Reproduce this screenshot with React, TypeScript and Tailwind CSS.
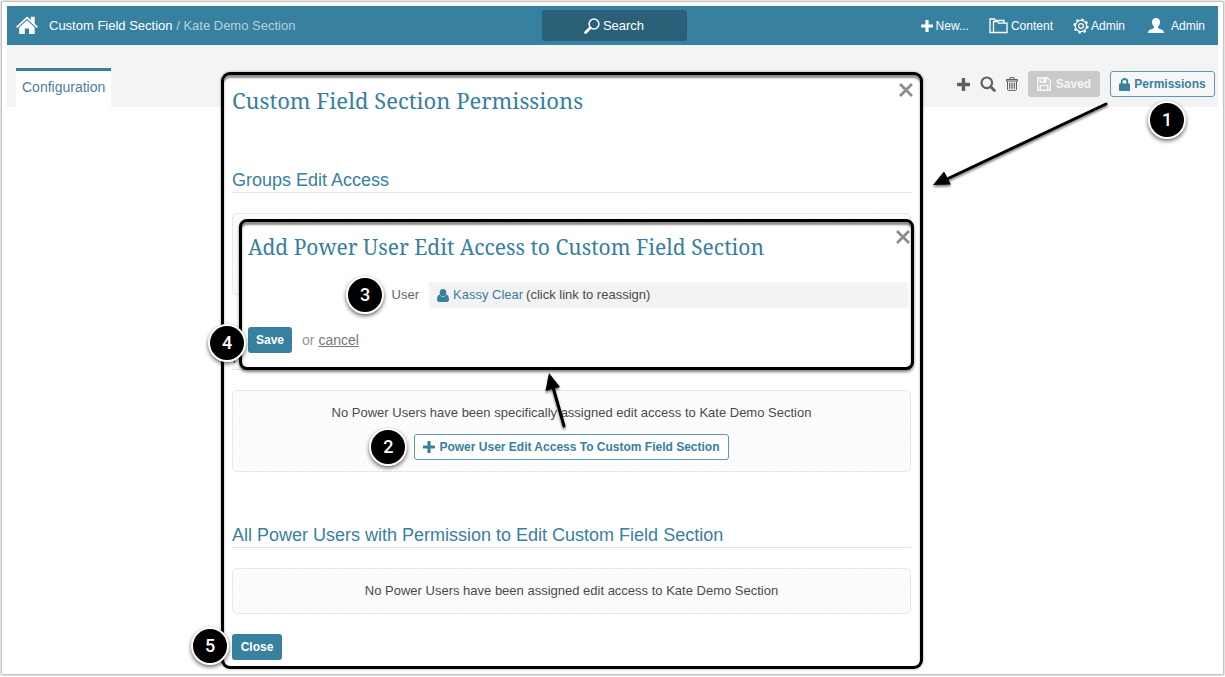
import type { ReactNode } from 'react'

const sans = "font-['Liberation_Sans',Arial,sans-serif]"
const serif = "font-['Noto_Serif','Liberation_Serif',serif]"

function cn(...classes: (string | false | undefined)[]) {
  return classes.filter(Boolean).join(' ')
}

function HomeIcon() {
  return (
    <svg viewBox="0 0 22 19" className="h-[19px] w-[22px]" fill="currentColor" aria-hidden="true">
      <path d="M11 .4 14.800 4V.8h3.900v6.900L22 10.800l-1.200 1.300L11 2.800 1.200 12.100 0 10.800z" />
      <path d="M11 4.200 3.200 11.600v6.400h5.600v-5.400h4.200v5.400h5.700v-6.400z" />
    </svg>
  )
}

function HeaderSearchIcon() {
  return (
    <svg viewBox="0 0 16 16" className="h-4 w-4" fill="none" stroke="currentColor" aria-hidden="true">
      <circle cx="10" cy="6" r="4.9" strokeWidth="1.5" />
      <path d="M6 10 1.600 14.400" strokeWidth="2.800" strokeLinecap="round" />
    </svg>
  )
}

function PlusIcon({ className = 'h-3 w-3' }: { className?: string }) {
  return (
    <svg viewBox="0 0 12 12" className={className} fill="currentColor" aria-hidden="true">
      <path d="M5 0h2a.6.6 0 0 1 .6.6v3.8h3.8a.6.6 0 0 1 .6.6v2a.6.6 0 0 1-.6.6H7.6v3.8A.6.6 0 0 1 7 12H5a.6.6 0 0 1-.6-.6V7.6H.6A.6.6 0 0 1 0 7V5a.6.6 0 0 1 .6-.6h3.8V.6A.6.6 0 0 1 5 0z" />
    </svg>
  )
}

function FoldersIcon() {
  return (
    <svg viewBox="0 0 19 16" className="h-4 w-[19px]" fill="none" stroke="currentColor" strokeWidth="1.3" aria-hidden="true">
      <path d="M4.500 14.500H1V1h4.500l1 1.500h8.500V5" />
      <path d="M4.500 14.500V3.500h4l1 1.700h8.500v9.300z" />
    </svg>
  )
}

function GearIcon() {
  return (
    <svg viewBox="0 0 16 16" className="h-4 w-4" fill="none" stroke="currentColor" aria-hidden="true">
      <circle cx="8" cy="8" r="6.9" strokeWidth="1.4" strokeDasharray="2.6 2.819" />
      <circle cx="8" cy="8" r="5.6" strokeWidth="1.2" />
      <circle cx="8" cy="8" r="2.4" strokeWidth="1.2" />
    </svg>
  )
}

function ProfileIcon() {
  return (
    <svg viewBox="0 0 16 15" className="h-[15px] w-4" fill="currentColor" aria-hidden="true">
      <path d="M8 0c2.600 0 4 1.700 4 4.100 0 2-.9 3.700-2 4.700v1.300c1 1 6 1.300 6 4.900H0c0-3.600 5-3.900 6-4.900V8.800C4.900 7.800 4 6.100 4 4.100 4 1.700 5.400 0 8 0z" />
    </svg>
  )
}

function UserIcon() {
  return (
    <svg viewBox="0 0 12 13" className="h-[13px] w-3" fill="currentColor" aria-hidden="true">
      <ellipse cx="6" cy="3.7" rx="3.3" ry="3.7" />
      <path d="M2.800 5.500c.8 1.700 1.900 2.500 3.200 2.500s2.400-.8 3.200-2.500c2 .4 2.800 2.500 2.800 5 0 1.600-.9 2.500-2.300 2.500H2.300C.9 13 0 12.100 0 10.500c0-2.500.8-4.600 2.800-5z" />
    </svg>
  )
}

function SearchIcon() {
  return (
    <svg viewBox="0 0 16 16" className="h-4 w-4" fill="none" stroke="currentColor" aria-hidden="true">
      <circle cx="6.8" cy="6.8" r="5.3" strokeWidth="2.2" />
      <path d="m11 11 3.400 3.400" strokeWidth="2.800" strokeLinecap="round" />
    </svg>
  )
}

function TrashIcon() {
  return (
    <svg viewBox="0 0 12 14" className="h-[14px] w-3" fill="none" stroke="currentColor" aria-hidden="true">
      <path d="M.5 4V2.500h11V4zM4 2.500V.6h4v1.900M1.500 4v8.300c0 .7.400 1.100 1.100 1.100h6.800c.7 0 1.100-.4 1.100-1.100V4" />
      <path d="M3.500 5.500v6.300M5.200 5.500v6.300M6.900 5.500v6.300M8.600 5.500v6.300" strokeWidth=".9" />
    </svg>
  )
}

function FloppyIcon() {
  return (
    <svg viewBox="0 0 14 14" className="h-[14px] w-[14px]" fill="none" stroke="currentColor" strokeWidth="1.4" strokeLinejoin="round" aria-hidden="true">
      <path d="M.7.7h9.600l3 3v9.600H.7z" />
      <path d="M3.200 13V8.500h7.600V13M3.200 1v4.200h6V1" />
      <path d="M6.600 1.500h1.600v2.600H6.600z" fill="currentColor" />
    </svg>
  )
}

function LockIcon() {
  return (
    <svg viewBox="0 0 11 13" className="h-[13px] w-[11px]" aria-hidden="true">
      <path d="M2.700 6V3.800a2.800 2.800 0 0 1 5.600 0V6" fill="none" stroke="currentColor" strokeWidth="1.8" />
      <rect y="5.600" width="11" height="7.400" rx=".8" fill="currentColor" />
    </svg>
  )
}

function CloseButton({ className }: { className: string }) {
  return (
    <button type="button" aria-label="Close dialog" className={cn('absolute text-[#8c8c8c]', className)}>
      <svg viewBox="0 0 14 14" className="h-[14px] w-[14px]" stroke="currentColor" strokeWidth="2.8" aria-hidden="true">
        <path d="m1 1 12 12M13 1 1 13" />
      </svg>
    </button>
  )
}

function Step({ n, className }: { n: number; className: string }) {
  return (
    <span
      className={cn(
        "absolute z-20 flex h-[38px] w-[38px] items-center justify-center rounded-full border-2 border-white bg-black font-['Roboto',sans-serif] text-[18px] leading-none font-medium text-white shadow-[0_2px_4px_rgba(0,0,0,0.6)]",
        className
      )}
    >
      {n}
    </span>
  )
}

function SectionHeading({ children, className }: { children: ReactNode; className?: string }) {
  return (
    <h3 className={cn('border-b border-[#e4e4e4] text-[18px] leading-6 text-[#37809f]', className)}>{children}</h3>
  )
}

function Panel({ children, className }: { children?: ReactNode; className?: string }) {
  return (
    <div
      className={cn(
        'mt-5 flex flex-col items-center rounded-[5px] border border-[#e8e8e8] bg-[repeating-linear-gradient(135deg,#fdfdfd_0_2px,#fafafa_2px_4px)] text-[13px] leading-5 text-[#4a4a4a]',
        className
      )}
    >
      {children}
    </div>
  )
}

function Header() {
  return (
    <header className="flex h-[39px] items-center bg-[#37809f] text-white">
      <div className="flex flex-1 items-center pl-[9px]">
        <a href="#home" aria-label="Home"><HomeIcon /></a>
        <nav className="ml-[11px] text-[13px] text-[#b5d0dc]">
          <a href="#section" className="text-white">Custom Field Section</a> / Kate Demo Section
        </nav>
      </div>
      <button type="button" className="ml-[7px] flex h-[31px] w-[145px] items-center justify-center gap-[3px] rounded-[3px] bg-[#2b6079] text-[13px]">
        <HeaderSearchIcon />
        Search
      </button>
      <nav className="flex flex-1 items-center justify-end pr-[13px] text-[12px]">
        <a href="#new" className="flex items-center gap-[3px]"><PlusIcon />New...</a>
        <a href="#content" className="ml-5 flex items-center gap-[3px]"><FoldersIcon />Content</a>
        <a href="#admin" className="ml-5 flex items-center gap-[2px]"><GearIcon />Admin</a>
        <a href="#profile" className="ml-[23px] flex items-center gap-[7px]"><ProfileIcon />Admin</a>
      </nav>
    </header>
  )
}

function Toolbar() {
  return (
    <div className="flex h-[62px] items-end justify-between bg-[#f4f4f4] pr-[3px] pl-[9px]">
      <a href="#configuration" className="flex h-[39px] items-center border-t-[3px] border-[#37809f] bg-white px-[6px] pb-1 text-[14px] text-[#4c7f99]">
        Configuration
      </a>
      <div className="flex items-center pb-[10px] text-[12px] font-bold text-[#606060]">
        <button type="button" aria-label="Add"><PlusIcon className="h-[13px] w-[13px]" /></button>
        <button type="button" aria-label="Find" className="ml-[10px]"><SearchIcon /></button>
        <button type="button" aria-label="Delete" className="ml-[10px]"><TrashIcon /></button>
        <button type="button" disabled className="ml-[10px] flex h-[26px] w-[72px] items-center justify-center gap-[5px] rounded-[3px] bg-[#cacaca] text-[#f6f6f6]">
          <FloppyIcon />
          Saved
        </button>
        <div className="relative ml-[10px]">
          <button type="button" className="flex h-[26px] w-[105px] items-center justify-center gap-1 rounded-[3px] border border-[#5c9ab4] bg-[#f7f7f7] text-[#37809f]">
            <LockIcon />
            Permissions
          </button>
          <Step n={1} className="top-[30px] left-[38px]" />
        </div>
      </div>
    </div>
  )
}

function AddPowerUserDialog() {
  return (
    <form
      role="dialog"
      aria-label="Add Power User"
      className="absolute top-[144px] right-[6px] left-[15px] z-10 rounded-[8px] border-[3px] border-black bg-white pt-[9px] pr-[3px] pb-[14px] pl-[6px] shadow-[0_2px_3px_rgba(0,0,0,0.5),inset_0_3px_2px_rgba(0,0,0,0.45)]"
    >
      <CloseButton className="top-[8px] right-[1px]" />
      <h2 className={cn(serif, 'text-[21px] leading-8 text-[#37809f]')}>
        Add Power User Edit Access to Custom Field Section
      </h2>
      <div className="mt-[19px] flex items-center text-[13px]">
        <span className="relative w-[171px] text-right text-[#666]">
          User
          <Step n={3} className="top-[-9px] left-[98px]" />
        </span>
        <div className="ml-[10px] flex h-[26px] flex-1 items-center bg-[#f3f3f3] pl-2 text-[#4a4a4a]">
          <a href="#reassign" className="mr-[3px] flex items-center gap-1 text-[#37809f]"><UserIcon />Kassy Clear</a>
          (click link to reassign)
        </div>
      </div>
      <div className="relative mt-[19px] flex items-center text-[14px] text-[#999]">
        <button type="submit" className="h-[26px] w-11 rounded-[3px] bg-[#37809f] text-[12px] font-bold text-white">Save</button>
        <span className="mr-1 ml-[10px]">or</span>
        <a href="#cancel" className="text-[#777] underline">cancel</a>
        <Step n={4} className="top-[-3px] left-[-40px]" />
      </div>
    </form>
  )
}

function PermissionsDialog() {
  return (
    <section
      role="dialog"
      aria-label="Permissions"
      className="absolute top-[70px] right-[300px] left-[219px] rounded-[9px] border-[3px] border-black bg-white pt-[9px] pr-[9px] pb-[6px] pl-2 shadow-[0_0_3px_rgba(0,0,0,0.35),inset_0_3px_2px_rgba(0,0,0,0.45)]"
    >
      <CloseButton className="top-[8px] right-[7px]" />
      <h2 className={cn(serif, 'text-[22px] leading-8 text-[#37809f]')}>Custom Field Section Permissions</h2>

      <SectionHeading className="mt-[52px]">Groups Edit Access</SectionHeading>
      <Panel className="h-[82px]" />

      <SectionHeading className="mt-[50px]">Power Users Edit Access</SectionHeading>
      <Panel className="pt-3 pb-[11px]">
        <p>No Power Users have been specifically assigned edit access to Kate Demo Section</p>
        <div className="relative mt-[11px]">
          <button type="button" className="flex h-[26px] items-center gap-1 rounded-[3px] border border-[#5c9ab4] bg-white px-2 text-[12px] font-bold text-[#37809f]">
            <PlusIcon />
            Power User Edit Access To Custom Field Section
          </button>
          <Step n={2} className="top-[-6px] left-[-45px]" />
        </div>
      </Panel>

      <SectionHeading className="mt-[51px]">All Power Users with Permission to Edit Custom Field Section</SectionHeading>
      <Panel className="py-3">
        <p>No Power Users have been assigned edit access to Kate Demo Section</p>
      </Panel>

      <div className="relative mt-5">
        <button type="button" className="block h-[26px] w-[50px] rounded-[3px] bg-[#37809f] text-[12px] font-bold text-white">Close</button>
        <Step n={5} className="top-[-7px] left-[-41px]" />
      </div>

      <AddPowerUserDialog />

      <svg viewBox="0 0 30 64" className="absolute top-[295px] left-[318px] z-20 h-16 w-[30px] drop-shadow-[0_2px_1px_rgba(0,0,0,0.5)]" aria-hidden="true">
        <path d="M22 56 11 17" stroke="#000" strokeWidth="3" strokeLinecap="round" />
        <path d="M7 3 3.500 21 18 17z" />
      </svg>
    </section>
  )
}

export default function App() {
  return (
    <div className={cn(sans, 'flex min-h-screen bg-white p-[2px] pb-[3px]')}>
      <main className="relative min-w-0 flex-1 bg-white px-[5px] pt-1 shadow-[0_0_2px_1px_rgba(0,0,0,0.35)]">
        <Header />
        <Toolbar />
        <PermissionsDialog />
        <svg viewBox="0 0 184 96" className="absolute top-[98px] right-[109px] h-24 w-[184px] drop-shadow-[0_2px_1px_rgba(0,0,0,0.5)]" aria-hidden="true">
          <path d="M176 4 17 79" stroke="#000" strokeWidth="3" strokeLinecap="round" />
          <path d="M3 85 14 71.500l7 13z" />
        </svg>
      </main>
    </div>
  )
}
